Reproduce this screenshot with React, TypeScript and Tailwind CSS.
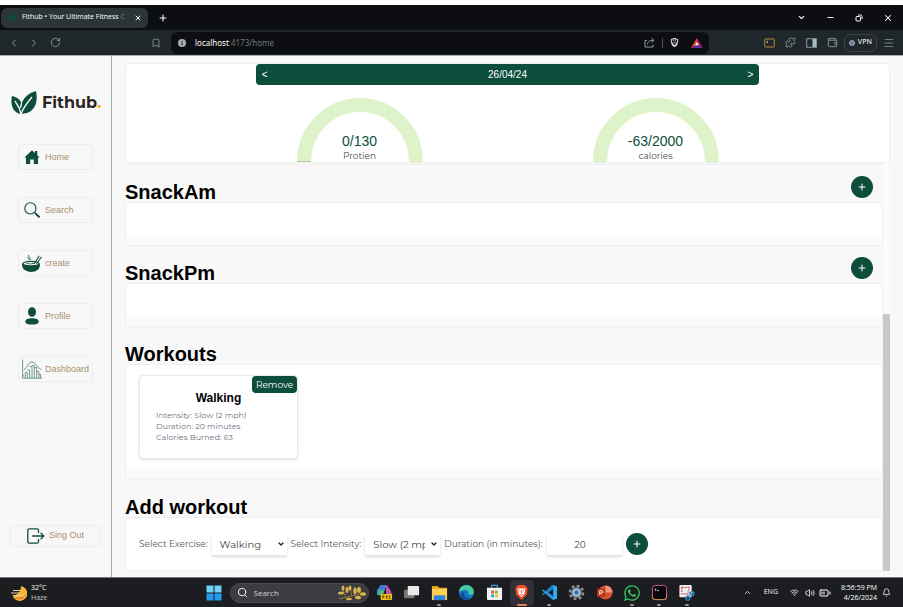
import React, { useState } from "react";
import { ChevronDown, ChevronLeft, ChevronRight, ChevronUp, Bookmark, Bell, Menu, Minus, Plus, Puzzle, RotateCw, Search as SearchIcon, Volume2, Wallet, Wifi, X, BatteryMedium } from "lucide-react";
import { FaWhatsapp } from "react-icons/fa";
import { SiBrave } from "react-icons/si";

const brand = "font-['Montserrat','Inter',sans-serif]";

function Leaves({ className, vein = "#f8f8f8" }: { className: string; vein?: string }) {
  return (
    <svg viewBox="0 0 26 24" className={className} aria-hidden="true">
      <path fill="#0d4d3c" d="M1 5c5 1 9 4 10 9l-2 9C2 21-1 14 1 5Z" />
      <path fill="#0d4d3c" d="M25 0c2 9 0 19-9 22l-6 1C8 12 14 3 25 0Z" />
      <path fill="none" stroke={vein} strokeWidth="1.3" d="M4 10c3 4 5 8 6 13C12 17 16 12 21 6M10.5 12l-1 5" />
    </svg>
  );
}

function HomeIcon() {
  return (
    <svg viewBox="0 0 16 16" className="h-4 w-4" fill="#0d4d3c" aria-hidden="true">
      <path d="M8 1.2 10.9 4V2h2.4v4.2L15.6 8.5H14V15H9.8v-4.4H6.2V15H2V8.5H.4Z" />
    </svg>
  );
}

function FindIcon() {
  return (
    <svg viewBox="0 0 16 16" className="h-4 w-4" fill="none" stroke="#0d4d3c" aria-hidden="true">
      <circle cx="6.4" cy="6.4" r="5.6" strokeWidth="1.1" />
      <path d="m10.6 10.6 1.4 1.2" strokeWidth="1.1" />
      <path d="m11.6 11.6 3.4 3.2" strokeWidth="1.9" strokeLinecap="round" />
    </svg>
  );
}

function BowlIcon() {
  return (
    <svg viewBox="0 0 20 19" className="h-[19px] w-5" aria-hidden="true">
      <path fill="#0d4d3c" d="M0 10.500C0 8 4 6.800 9 6.800s9 1.300 9 3.700c0 3.500-1.500 5.300-4 6.300-.3 1.500-9.200 1.500-9.500 0C1.500 15.800 0 14 0 10.500Z" />
      <ellipse cx="9" cy="9.600" rx="7.400" ry="1.700" fill="#f8f8f8" />
      <path fill="none" stroke="#0d4d3c" strokeWidth="1.100" strokeLinecap="round" d="M12.500 9.500 17 2.200M14.800 9.500l4.400-6.200" />
      <path fill="none" stroke="#0d4d3c" strokeWidth=".8" d="M6.500 1c-.5 2 2.500 2.500 1.800 4.500C6.500 5.500 5.500 4 6 3" />
      <path fill="#0d4d3c" d="M3.500 9.800c2-1.500 4 .3 6-.4s2.500-.5 3.500 0c-2 1-7 1-9.500.4Z" />
    </svg>
  );
}

function PersonIcon() {
  return (
    <svg viewBox="0 0 14 18" className="h-[18px] w-3.5" fill="#0d4d3c" aria-hidden="true">
      <ellipse cx="7" cy="5" rx="4" ry="4.800" />
      <path d="M.3 14.500c0-2.200 3-3.200 6.700-3.200s6.700 1 6.700 3.200S11 17.600 7 17.600.3 16.700.3 14.500Z" />
    </svg>
  );
}

function ChartIcon() {
  return (
    <svg viewBox="0 0 20 20" className="h-5 w-5" fill="none" stroke="#4f8073" aria-hidden="true">
      <path d="M.6.500v18.700H20M.6 16.800h1.400" strokeWidth=".8" />
      <path d="M2 10.500C5.500 9.500 6 3 10 3s5 6.500 9.500 7.500" strokeWidth=".8" />
      <path d="M3.300 19v-5.500h2V19m0-8h2.300v8m0-11.500H10V19m0-12.500h2.300V19m0-10.500h2.400V19m0-6.500h2.200V19m0-3.500h1.800V19" strokeWidth=".8" />
    </svg>
  );
}

function ExitIcon() {
  return (
    <svg viewBox="0 0 18 16" className="h-4 w-[18px]" fill="none" stroke="#0d4d3c" strokeWidth="1.300" strokeLinecap="round" strokeLinejoin="round" aria-hidden="true">
      <path d="M11.500 4.500V2.300A1.500 1.500 0 0 0 10 .8H2.300A1.500 1.500 0 0 0 .8 2.300v11.400a1.500 1.500 0 0 0 1.500 1.500H10a1.500 1.500 0 0 0 1.500-1.500v-2.200M5.500 8h11M14 5.200 16.800 8 14 10.800" />
    </svg>
  );
}

function BrowserChrome() {
  return (
    <header className="bg-white pt-[5px] font-['Open_Sans','Noto_Sans',sans-serif]">
      <div className="flex h-[25px] items-center bg-[#0d0e12] text-white">
        <div className="ml-px flex h-5 w-[147px] items-center rounded-md bg-[#2b3437] pr-1 pl-1.5">
          <Leaves className="h-[9px] w-2.5" vein="#2b3437" />
          <span className="ml-[5px] flex-1 text-[7px] whitespace-nowrap">Fithub • Your Ultimate Fitness <span className="text-[#7d8588]">C</span></span>
          <button aria-label="Close tab" className="p-0.5"><X size={8} strokeWidth={3} /></button>
        </div>
        <button aria-label="New tab" className="ml-2.5"><Plus size={10} strokeWidth={2.5} /></button>
        <div className="ml-auto flex items-center gap-5 pr-[10px]">
          <button aria-label="Tab list"><ChevronDown size={9} strokeWidth={3} /></button>
          <button aria-label="Minimise"><Minus size={9} strokeWidth={2.500} /></button>
          <button aria-label="Restore">
            <svg viewBox="0 0 8 8" className="h-2 w-2" fill="none" stroke="white"><rect x="1" y="2.500" width="4.500" height="4.500" rx="1" /><path d="M3 1h2.500A1.500 1.500 0 0 1 7 2.500V5" /></svg>
          </button>
          <button aria-label="Close window"><X size={10} strokeWidth={2.500} /></button>
        </div>
      </div>
      <div className="flex h-[26px] items-center border-b border-[#a9adb0] bg-[#20272a] pr-2 pl-2 text-[#8d989c]">
        <button aria-label="Back"><ChevronLeft size={12} /></button>
        <button aria-label="Forward" className="ml-2"><ChevronRight size={12} /></button>
        <button aria-label="Reload" className="ml-2.5"><RotateCw size={11} /></button>
        <button aria-label="Bookmark" className="ml-[90px]"><Bookmark size={10} /></button>
        <div className="ml-2.5 flex h-[22px] w-[538px] items-center rounded-md bg-[#0d0e12] pr-1.5 pl-[7px]">
          <svg viewBox="0 0 8 8" className="h-2 w-2"><circle cx="4" cy="4" r="4" fill="#a9adb0" /><path d="M4 3.500V6M4 2v.9" stroke="#0d0e12" /></svg>
          <span className="ml-[9px] font-['Noto_Sans',sans-serif] text-[8px] text-[#70777b]"><span className="text-white">localhost</span>:4173/home</span>
          <button aria-label="Share" className="ml-auto">
            <svg viewBox="0 0 11 11" className="h-[11px] w-[11px]" fill="none" stroke="currentColor"><path d="M3 3.500H1v6.500h8V7.500M3.500 7.500c0-3 2-4.200 6-4.200M7.500 1l2.500 2.300-2.500 2.300" /></svg>
          </button>
          <span className="mx-[7px] h-2.5 w-px bg-[#4c5357]" />
          <button aria-label="Shields" className="text-[#d9dadd]"><SiBrave size={9} /></button>
          <button aria-label="Rewards" className="ml-3">
            <svg viewBox="0 0 12 10" className="h-2.5 w-3"><path d="M6 0 0 10l6-3.500Z" fill="#ff4724" /><path d="m6 0 6 10-6-3.500Z" fill="#9e1f63" /><path d="m0 10 6-3.500L12 10Z" fill="#662d91" /><path d="m6 4 2 3.300H4Z" fill="white" /></svg>
          </button>
        </div>
        <div className="ml-auto flex items-center gap-2.5">
          <button aria-label="Console"><svg viewBox="0 0 11 10" className="h-2.5 w-[11px]"><rect x=".7" y="1" width="9.600" height="8" rx="1" fill="#20272a" stroke="#b58739" /><path d="m2.500 3 1.500 1-1.500 1" stroke="#ddd" fill="none" strokeWidth=".8" /></svg></button>
          <button aria-label="Extensions"><Puzzle size={11} /></button>
          <button aria-label="Side panel"><svg viewBox="0 0 11 10" className="h-2.5 w-[11px]"><rect x=".7" y=".7" width="9.600" height="8.600" fill="none" stroke="#8d989c" /><path d="M6.500 1h3.800v8H6.500Z" fill="#a8bac1" /></svg></button>
          <button aria-label="Wallet"><Wallet size={11} /></button>
          <button className="-ml-1 flex h-[18px] items-center gap-[3px] rounded-md border border-[#3a4246] px-1 text-[7px] font-semibold text-[#dde0e4]">
            <span className="h-1.5 w-1.5 rounded-full border border-[#a7a6bf] bg-[#77768f]" />VPN
          </button>
          <button aria-label="Menu" className="-ml-1"><Menu size={12} strokeWidth={1.500} /></button>
        </div>
      </div>
    </header>
  );
}

const links = [
  { label: "Home", icon: <HomeIcon /> },
  { label: "Search", icon: <FindIcon /> },
  { label: "create", icon: <BowlIcon /> },
  { label: "Profile", icon: <PersonIcon /> },
  { label: "Dashboard", icon: <ChartIcon /> },
];

function Sidebar() {
  return (
    <aside className="flex w-28 shrink-0 flex-col border-r border-[#9bb5ad] font-['Liberation_Sans',Arial,sans-serif]">
      <div className="flex items-center gap-[5px] pt-[35px] pl-[11px]">
        <Leaves className="h-6 w-[26px]" />
        <span className={`${brand} text-base leading-6 font-bold text-[#2b2523]`}>Fithub<span className="text-[#ffa31a]">.</span></span>
      </div>
      <nav className="mt-[29px] ml-[18px] flex flex-col gap-[27px]">
        {links.map((l) => (
          <a key={l.label} href="#" className="flex h-[26px] w-[75px] items-center gap-[3px] rounded border border-[#ededed] pl-[3px] text-[9px] leading-[14px] whitespace-nowrap text-[#a88f6a]">
            <span className="flex w-5 shrink-0 justify-center">{l.icon}</span>
            {l.label}
          </a>
        ))}
      </nav>
      <button className="mx-2.5 mt-auto mb-[30px] flex h-[22px] items-center justify-center gap-1 rounded border border-[#ededed] text-[9px] text-[#a88f6a]">
        <ExitIcon />
        Sing Out
      </button>
    </aside>
  );
}

function Gauge({ value, label, started }: { value: string; label: string; started?: boolean }) {
  return (
    <div className="relative h-16 w-[126px]">
      <svg viewBox="0 0 126 64" className="h-16 w-[126px]" aria-hidden="true">
        <path d="M7 64a56 57 0 0 1 112 0" fill="none" stroke="#def3c9" strokeWidth="14" />
        {started && <path d="M0 63.500h14" stroke="#a9cbb0" />}
      </svg>
      <div className="absolute inset-x-0 bottom-0 text-center">
        <div className="font-['Liberation_Sans',Arial,sans-serif] text-sm leading-[18px] text-[#0d4d3c]">{value}</div>
        <div className={`${brand} text-[9px] leading-3 text-[#4b4b4b]`}>{label}</div>
      </div>
    </div>
  );
}

function RoundPlus({ label, className = "" }: { label: string; className?: string }) {
  return (
    <button type="button" aria-label={label} className={`flex h-[22px] w-[22px] shrink-0 items-center justify-center rounded-full bg-[#0d4d3c] text-white ${className}`}>
      <Plus size={10} strokeWidth={2.500} />
    </button>
  );
}

function Section({ title, add, children }: { title: string; add?: boolean; children?: React.ReactNode }) {
  return (
    <section>
      <div className="flex h-[37px] items-end justify-between pr-2.5">
        <h2 className="font-['Liberation_Sans',Arial,sans-serif] text-xl leading-5 font-bold text-black">{title}</h2>
        {add && <RoundPlus label={`Add to ${title}`} className="mb-1" />}
      </div>
      <div className="rounded-t border border-[#efefef] bg-[#fbfbfb] pb-2.5">
        <div className="min-h-8 rounded-t bg-white">{children}</div>
      </div>
    </section>
  );
}

const field = "h-[22px] w-[75px] bg-white text-[#444] shadow-[0_2px_3px_rgba(0,0,0,0.14)]";

function Picker({ id, label, options }: { id: string; label: string; options: string[] }) {
  return (
    <>
      <label htmlFor={id}>{label}</label>
      <div className="relative">
        <select id={id} className={`${field} appearance-none overflow-hidden pr-[15px] pl-2 text-[10px] text-clip`}>
          {options.map((o) => <option key={o}>{o}</option>)}
        </select>
        <ChevronDown size={8} strokeWidth={4} className="pointer-events-none absolute top-[7px] right-0.5 text-[#222]" />
      </div>
    </>
  );
}

function AddWorkout() {
  const [minutes, setMinutes] = useState("20");
  return (
    <section>
      <h2 className="flex h-[38px] items-end font-['Liberation_Sans',Arial,sans-serif] text-xl leading-5 font-bold text-black">Add workout</h2>
      <form className={`${brand} flex h-[54px] items-center gap-1 rounded border border-[#ededed] bg-white pl-[13px] text-[9px] whitespace-nowrap text-[#555]`}>
        <Picker id="exercise" label="Select Exercise:" options={["Walking", "Running", "Cycling"]} />
        <Picker id="intensity" label="Select Intensity:" options={["Slow (2 mph)", "Moderate (3 mph)", "Fast (4 mph)"]} />
        <label htmlFor="duration">Duration (in minutes):</label>
        <input id="duration" inputMode="numeric" value={minutes} onChange={(e) => setMinutes(e.target.value)} className={`${field} pr-2 text-center text-[9px]`} />
        <RoundPlus label="Add workout" />
      </form>
    </section>
  );
}

function Diary() {
  return (
    <main className="flex min-w-0 flex-1 flex-col pt-[7px] pr-[13px] pb-1.5 pl-[13px]">
      <div className="rounded border border-[#efefef] bg-white">
        <div className="mx-auto flex h-[21px] w-[66%] items-center justify-between rounded-sm bg-[#0d4d3c] px-1.5 font-['Liberation_Sans',Arial,sans-serif] text-[10px] text-white">
          <button aria-label="Previous day">&lt;</button>
          <span>26/04/24</span>
          <button aria-label="Next day">&gt;</button>
        </div>
        <div className="flex justify-center gap-[170px] pt-[13px]">
          <Gauge value="0/130" label="Protien" started />
          <Gauge value="-63/2000" label="calories" />
        </div>
      </div>
      <div className="flex flex-1">
        <div className="min-w-0 flex-1">
          <div className="h-0.5 border-b border-[#efefef]" />
          <Section title="SnackAm" add />
          <Section title="SnackPm" add />
          <Section title="Workouts">
            <div className="px-[13px] pt-2.5 pb-[9px]">
              <article className={`${brand} relative h-[84px] w-[159px] rounded border border-[#e9e9e9] bg-white px-4 pt-[15px] shadow-sm`}>
                <button className="absolute top-0 right-0 h-[17px] w-[45px] rounded-sm bg-[#0d4d3c] text-[9px] text-white">Remove</button>
                <h3 className="text-center font-['Liberation_Sans',Arial,sans-serif] text-xs leading-[14px] font-bold text-black">Walking</h3>
                <div className="pt-[5px] text-[8px] leading-[11px] text-[#6b7280]">
                  <p>Intensity: Slow (2 mph)</p>
                  <p>Duration: 20 minutes</p>
                  <p>Calories Burned: 63</p>
                </div>
              </article>
            </div>
          </Section>
          <AddWorkout />
        </div>
        <div className="flex w-[7px] flex-col justify-end bg-[#fbfbfb]">
          <div className="h-[63%] bg-[#c9c9c9]" />
        </div>
      </div>
    </main>
  );
}

const apps = [
  { name: "Copilot", art: <><path d="M5 1h6l-3 9H4L1 12V7Z" fill="#2a9be0" /><path d="M10 1c3 0 3 3 5 5l2 5h-6Z" fill="#c84fb4" /><path d="M5 1h6L9 6H4Z" fill="#4772dd" /><path d="M4 6h5l-2 6H2Z" fill="#55b87a" /><rect x="5" y="10.500" width="12" height="6.500" rx="1" fill="#f0c21d" /><path d="M7 15.500v-3h1.500v1.500H7m4 1.500v-3h1.500L11 14l1.500 1.500m3-3H14v3h1.500M14 14h1.300" stroke="#443300" strokeWidth=".7" fill="none" /></> },
  { name: "Task view", art: <><rect x="1" y="6" width="11" height="9" rx="1" fill="#77777a" /><rect x="5" y="2" width="12" height="10" rx="1" fill="#e9e9e9" /></> },
  { name: "Explorer", open: true, art: <><path d="M1 2h6l2 2h8v12H1Z" fill="#e5a51a" /><path d="M1 5h16v12H1Z" fill="#ffd052" /><path d="M3 12h12v5H3Z" fill="#2b86d9" /></> },
  { name: "Edge", art: <><circle cx="9" cy="9" r="8" fill="#1676c8" /><path d="M1 9C1 4 4 1 9 1s9 5 7.500 8.500C15 12 11 12 11 10c1-4-6-5-10-1Z" fill="#45c9a3" /><path d="M7 8c-2 3 0 8 7 6.500-4 4-11 3-11-3C3 9.500 5 8 7 8Z" fill="#164d96" /></> },
  { name: "Store", art: <><path d="M6 4V1.500h6V4" stroke="#3a9bdc" fill="none" strokeWidth="1.300" /><path d="M1 4h16v12q0 1-1 1H2q-1 0-1-1Z" fill="#f0f2f5" /><path d="M5.500 7h3v3h-3Z" fill="#ef5326" /><path d="M9.500 7h3v3h-3Z" fill="#7fb91d" /><path d="M5.500 11h3v3h-3Z" fill="#1da1e8" /><path d="M9.500 11h3v3h-3Z" fill="#f6b91b" /></> },
  { name: "Brave", open: true, active: true, art: <><path d="M6 1h6l2 1.500L15.500 5l-1 6.500L9 17l-5.500-5.500-1-6.500L4 2.500Z" fill="#f04d2b" /><path d="m4.500 5 3-.5L9 5l1.500-.5 3 .5-1.500 4 .5 1L9 14l-3.500-4 .5-1Z" fill="white" /><path d="m6 6 2 1m4-1-2 1M9 7v3m-1.500 1L9 12l1.500-1" stroke="#f04d2b" fill="none" /></> },
  { name: "VS Code", open: true, art: <><path d="m13 1 4 2v12l-4 2L5 9.500 2.500 12 1 11l10-9.300Z" fill="#1681c7" /><path d="M2.500 6 13 14.500V17l-12-10Z" fill="#2da2ec" /><path d="m13 5-5 4 5 4Z" fill="#1c1d22" /><path d="m13 1 4 2v12l-4 2Z" fill="#38a9ef" /></> },
  { name: "Settings", art: <><circle cx="9" cy="9" r="5.500" fill="#8a929a" /><circle cx="9" cy="9" r="7" fill="none" stroke="#8a929a" strokeWidth="2.500" strokeDasharray="3 2.500" /><circle cx="9" cy="9" r="3.500" fill="#cdd5dc" /><circle cx="9" cy="9" r="2.500" fill="#2375c4" /></> },
  { name: "PowerPoint", art: <><circle cx="10" cy="9" r="7.500" fill="#d65131" /><path d="M10 1.500A7.500 7.500 0 0 1 17.500 9H10Z" fill="#f29478" /><rect x="1" y="5" width="8.500" height="8.500" rx="1" fill="#b93418" /><path d="M4 11.500V7h1.800a1.400 1.400 0 0 1 0 2.800H4" stroke="white" fill="none" /></> },
  { name: "WhatsApp", open: true },
  { name: "Terminal", open: true, art: <><rect x="1.500" y="1.500" width="15" height="15" rx="3" fill="#080808" stroke="#d35b8c" /><path d="M1.500 12v2q0 2.500 2.500 2.500h10q2.500 0 2.500-2.500v-2" fill="none" stroke="#d98c55" /><path d="m4 5 1.500 1L4 7m2.500 0h2" fill="none" stroke="white" strokeWidth=".9" /></> },
  { name: "Snipping tool", open: true, art: <><rect x="1.500" y="1" width="13" height="13" rx="1" fill="#edf1f4" /><rect x="4" y="3.500" width="7.500" height="7" fill="none" stroke="#d34b36" strokeWidth="1.300" strokeDasharray="2 1" /><path d="m7 14 9-5M10 8l3 6" stroke="#b9c3cc" strokeWidth="1.200" /><circle cx="15" cy="10" r="2" fill="none" stroke="#2588c9" strokeWidth="1.400" /><circle cx="10.500" cy="15" r="2" fill="none" stroke="#2588c9" strokeWidth="1.400" /></> },
];

function Taskbar() {
  return (
    <footer className="grid h-[30px] grid-cols-[1fr_auto_1fr] items-center border-t border-[#77777a] bg-[#1c1d20] pr-2 pl-[11px] font-['Open_Sans','Noto_Sans',sans-serif] text-white">
      <div className="flex items-center gap-1">
        <svg viewBox="0 0 16 16" className="h-4 w-4" aria-hidden="true"><path d="M10 1a7.500 7.500 0 1 1-8.500 9C7 11 10 6 10 1Z" fill="#f5b638" /><path d="M3 12c4 1 9 1 12-3a7 7 0 0 1-12 3Z" fill="#ee8127" /><path d="M2 5.500h8M0 8h9M3 10.500h10" stroke="#e9cf91" strokeWidth="1.100" /></svg>
        <div className="text-[7px] leading-[10px]"><div>32°C</div><div className="text-[#c5c5c5]">Haze</div></div>
      </div>
      <div className="flex items-center">
        <button aria-label="Start" className="mr-2">
          <svg viewBox="0 0 16 16" className="h-4 w-4"><path d="M.5.500h7v7h-7zM8.500.500h7v7h-7z" fill="#6fd0fb" /><path d="M.5 8.500h7v7h-7zM8.500 8.500h7v7h-7z" fill="#249cf0" /></svg>
        </button>
        <label className="flex h-5 w-[139px] items-center rounded-full border border-[#4a4b4e] bg-[#3c3d40] pr-0.5 pl-1.5">
          <SearchIcon size={11} />
          <input aria-label="Search" placeholder="Search" className="ml-1.5 w-20 min-w-0 flex-1 text-[8px] placeholder:text-[#d5d5d5]" />
          <svg viewBox="0 0 28 16" className="h-4 w-7" aria-hidden="true">
            <path d="M1 14C8 12 16 11 26 8M8 12 5 5M14 11l-2-8" fill="none" stroke="#98763c" />
            <g fill="#d9b64d"><ellipse cx="5" cy="3" rx="1.500" ry="2.500" /><ellipse cx="3" cy="8" rx="3" ry="1.500" /><ellipse cx="9" cy="5" rx="1.500" ry="3" /><ellipse cx="12" cy="3" rx="1.500" ry="2.500" /><ellipse cx="17" cy="6" rx="1.700" ry="3.500" /><ellipse cx="21" cy="5" rx="2" ry="3" /><ellipse cx="25" cy="9" rx="3" ry="1.800" /><ellipse cx="20" cy="12.500" rx="3" ry="1.800" /><ellipse cx="11" cy="14" rx="3" ry="1.300" /></g>
          </svg>
        </label>
        <div className="ml-0.5 grid w-[330px] grid-cols-12 justify-items-center">
          {apps.map((a) => (
            <button key={a.name} aria-label={a.name} className={`relative flex h-[26px] w-6 items-center justify-center rounded ${a.active ? "bg-[#303136]" : ""}`}>
              {a.art ? <svg viewBox="0 0 18 18" className="h-[17px] w-[17px]">{a.art}</svg> : <FaWhatsapp size={18} color="#31c860" />}
              {a.open && <span className={`absolute bottom-0 h-0.5 rounded ${a.active ? "w-2.5 bg-[#e08065]" : "w-1 bg-[#909195]"}`} />}
            </button>
          ))}
        </div>
      </div>
      <div className="mr-1 flex items-center justify-end text-[7px]">
        <ChevronUp size={9} />
        <span className="ml-3">ENG</span>
        <Wifi size={9} className="ml-3" />
        <Volume2 size={10} className="ml-1.5" />
        <BatteryMedium size={12} className="ml-1" />
        <div className="ml-2.5 text-right leading-[10px] whitespace-nowrap"><div>8:56:59 PM</div><div>4/26/2024</div></div>
        <Bell size={9} className="ml-[5px]" />
      </div>
    </footer>
  );
}

export default function App() {
  return (
    <div className="flex min-h-screen flex-col bg-[#f8f8f8]">
      <BrowserChrome />
      <div className="flex flex-1">
        <Sidebar />
        <Diary />
      </div>
      <Taskbar />
    </div>
  );
}
